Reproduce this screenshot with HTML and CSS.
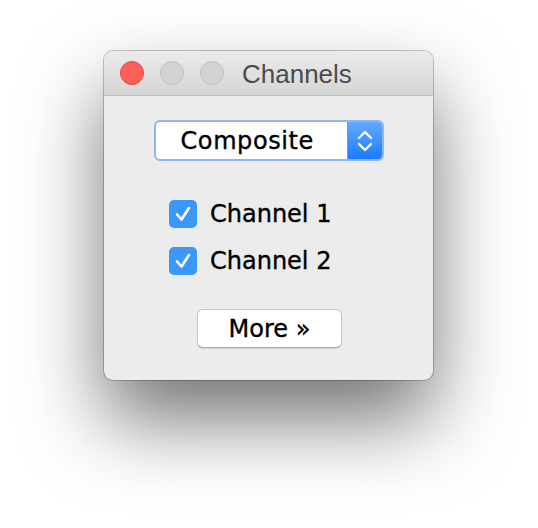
FILE: index.html
```html
<!DOCTYPE html>
<html>
<head>
<meta charset="utf-8">
<link rel="stylesheet" href="styles.css">
</head>
<body>
<div class="stage">
  <div class="window">
    <div class="titlebar">
      <span class="light close"></span>
      <span class="light"></span>
      <span class="light"></span>
      <span class="title">Channels</span>
    </div>
    <div class="content">
      <div class="popup">
        <span class="popup-label">Composite</span>
        <span class="popup-arrows">
          <svg width="20" height="26" viewBox="0 0 20 26">
            <path d="M4 10 L10 4 L16 10" fill="none" stroke="#fff" stroke-width="2.4" stroke-linecap="round" stroke-linejoin="round"/>
            <path d="M4 16 L10 22 L16 16" fill="none" stroke="#fff" stroke-width="2.4" stroke-linecap="round" stroke-linejoin="round"/>
          </svg>
        </span>
      </div>
      <div class="checks">
        <label class="check">
          <span class="box">
            <svg width="28" height="28" viewBox="0 0 28 28"><path d="M8 14.5 L12.5 19.5 L20 8" fill="none" stroke="#fff" stroke-width="2.6" stroke-linecap="round" stroke-linejoin="round"/></svg>
          </span>
          <span class="check-label">Channel 1</span>
        </label>
        <label class="check">
          <span class="box">
            <svg width="28" height="28" viewBox="0 0 28 28"><path d="M8 14.5 L12.5 19.5 L20 8" fill="none" stroke="#fff" stroke-width="2.6" stroke-linecap="round" stroke-linejoin="round"/></svg>
          </span>
          <span class="check-label">Channel 2</span>
        </label>
      </div>
      <button class="more">More »</button>
    </div>
  </div>
</div>
</body>
</html>
```
FILE: styles.css
```css
html, body {
  margin: 0;
  padding: 0;
  background: #ffffff;
}
.stage {
  width: 538px;
  height: 528px;
  display: flex;
  justify-content: flex-start;
  align-items: flex-start;
  padding: 51px 0 0 104px;
  box-sizing: border-box;
}
.window {
  width: 329px;
  height: 329px;
  background: #ececec;
  border-radius: 9px;
  box-shadow: 0 0 0 1px rgba(0,0,0,0.22), 0 40px 80px rgba(0,0,0,0.55);
  display: flex;
  flex-direction: column;
  overflow: hidden;
}
.titlebar {
  height: 44px;
  flex: none;
  background: linear-gradient(#ebebeb, #d5d5d5);
  border-bottom: 1px solid #b9b9b9;
  display: flex;
  align-items: center;
  padding-left: 16px;
  gap: 16px;
}
.light {
  width: 22px;
  height: 22px;
  border-radius: 50%;
  background: #d3d3d3;
  border: 1px solid #c2c2c2;
  flex: none;
}
.light.close {
  background: #fe5f57;
  border-color: #e2463f;
}
.title {
  margin-left: 2px;
  font-family: "Liberation Sans", Arial, sans-serif;
  font-size: 26px;
  color: #4b4b4b;
  line-height: 1;
  padding-top: 2px;
}
.content {
  flex: 1;
  display: flex;
  flex-direction: column;
  align-items: center;
  padding-top: 24px;
  font-family: "DejaVu Sans", sans-serif;
}
.popup {
  width: 230px;
  height: 41px;
  box-sizing: border-box;
  border: 2px solid #8ab6f2;
  border-radius: 6px;
  background: #fff;
  display: flex;
  overflow: hidden;
}
.popup-label {
  flex: 1;
  display: flex;
  align-items: center;
  padding-left: 25px;
  font-size: 24px;
  color: #000;
  letter-spacing: 0.6px;
  -webkit-text-stroke: 0.35px #000;
}
.popup-arrows {
  width: 34px;
  background: linear-gradient(#63aaff, #1a7cff);
  display: flex;
  align-items: center;
  justify-content: center;
  border-left: 1px solid #5d9ff0;
}
.checks {
  align-self: flex-start;
  margin-left: 65px;
  margin-top: 39px;
  display: flex;
  flex-direction: column;
  gap: 19px;
}
.check {
  display: flex;
  align-items: center;
  gap: 13px;
}
.box {
  width: 28px;
  height: 28px;
  border-radius: 5px;
  background: #3b98fb;
  display: block;
}
.box svg { display: block; }
.check-label {
  font-size: 24px;
  color: #000;
  line-height: 28px;
  -webkit-text-stroke: 0.35px #000;
}
.more {
  margin-top: 34px;
  width: 145px;
  height: 39px;
  margin-left: 2px;
  background: #fff;
  border: 1px solid #c6c6c6;
  border-bottom-color: #aaa;
  border-radius: 6px;
  box-shadow: 0 1px 1px rgba(0,0,0,0.12);
  font-family: "DejaVu Sans", sans-serif;
  font-size: 24px;
  color: #000;
  -webkit-text-stroke: 0.35px #000;
  padding: 0;
}
```
